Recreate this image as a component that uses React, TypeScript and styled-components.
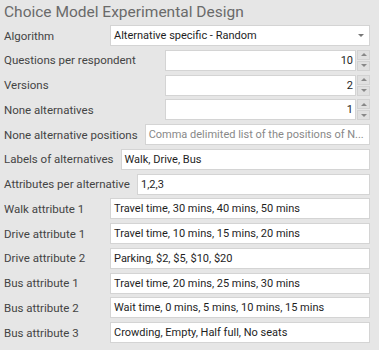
import React from "react";
import styled, { createGlobalStyle } from "styled-components";

const GlobalStyle = createGlobalStyle`
  body {
    margin: 0;
    background: #e6e6e6;
    font-family: Roboto, "Open Sans", sans-serif;
  }
`

interface field {
  label : string,
  kind : 'select' | 'number' | 'text',
  value? : string,
  placeholder? : string
}

const fields : field[] = [
  { label: 'Algorithm', kind: 'select', value: 'Alternative specific - Random' },
  { label: 'Questions per respondent', kind: 'number', value: '10' },
  { label: 'Versions', kind: 'number', value: '2' },
  { label: 'None alternatives', kind: 'number', value: '1' },
  { label: 'None alternative positions', kind: 'text', placeholder: 'Comma delimited list of the positions of N...' },
  { label: 'Labels of alternatives', kind: 'text', value: 'Walk, Drive, Bus' },
  { label: 'Attributes per alternative', kind: 'text', value: '1,2,3' },
  { label: 'Walk attribute 1', kind: 'text', value: 'Travel time, 30 mins, 40 mins, 50 mins' },
  { label: 'Drive attribute 1', kind: 'text', value: 'Travel time, 10 mins, 15 mins, 20 mins' },
  { label: 'Drive attribute 2', kind: 'text', value: 'Parking, $2, $5, $10, $20' },
  { label: 'Bus attribute 1', kind: 'text', value: 'Travel time, 20 mins, 25 mins, 30 mins' },
  { label: 'Bus attribute 2', kind: 'text', value: 'Wait time, 0 mins, 5 mins, 10 mins, 15 mins' },
  { label: 'Bus attribute 3', kind: 'text', value: 'Crowding, Empty, Half full, No seats' },
]

export default function App () {
  return (
    <>
      <GlobalStyle />
      <Panel>
        <Title>Choice Model Experimental Design</Title>
        <Form>
          {fields.map((f) => (
            <Row key={f.label}>
              <Label>{f.label}</Label>
              {f.kind === 'select' && (
                <Select>
                  <span>{f.value}</span>
                  <Caret />
                </Select>
              )}
              {f.kind === 'number' && (
                <NumberBox>
                  <NumberInput>{f.value}</NumberInput>
                  <Spinner>
                    <SpinButton><Arrow up /></SpinButton>
                    <SpinButton><Arrow /></SpinButton>
                  </Spinner>
                </NumberBox>
              )}
              {f.kind === 'text' && (
                <TextInput placeholder={!f.value}>{f.value || f.placeholder}</TextInput>
              )}
            </Row>
          ))}
        </Form>
      </Panel>
    </>
  )
}

const Panel = styled.div`
  width: 379px;
  height: 350px;
  box-sizing: border-box;
  padding: 1px 9px 0 4px;
`

const Title = styled.div`
  font-size: 15.5px;
  color: #6a6a6a;
  height: 24px;
  line-height: 22px;
  white-space: nowrap;
`

const Form = styled.div`
  display: flex;
  flex-direction: column;
  gap: 3.75px;
`

const Row = styled.div`
  display: flex;
  align-items: center;
  height: 21px;
`

const Label = styled.div`
  min-width: 99px;
  margin-right: 7px;
  font-size: 11.5px;
  color: #444;
  white-space: nowrap;
`

const boxBase = `
  height: 21px;
  box-sizing: border-box;
  background: #fff;
  border: 1px solid #d4d4d4;
  font-size: 11px;
  color: #1e1e1e;
  display: flex;
  align-items: center;
  white-space: nowrap;
  overflow: hidden;
`

const Select = styled.div`
  ${boxBase}
  flex: 1;
  padding: 0 3px;
  justify-content: space-between;
`

const Caret = styled.div`
  width: 0;
  height: 0;
  margin-right: 2px;
  border-left: 3px solid transparent;
  border-right: 3px solid transparent;
  border-top: 3px solid #777;
`

const NumberBox = styled.div`
  margin-left: auto;
  display: flex;
  height: 21px;
`

const NumberInput = styled.div`
  ${boxBase}
  width: 191px;
  justify-content: flex-end;
  padding-right: 2px;
`

const Spinner = styled.div`
  width: 13px;
  display: flex;
  flex-direction: column;
  gap: 1px;
  margin-left: 1px;
`

const SpinButton = styled.div`
  flex: 1;
  background: #e0e0e0;
  border: 1px solid #d2d2d2;
  display: flex;
  align-items: center;
  justify-content: center;
`

const Arrow = styled.div<{up? : boolean}>`
  width: 0;
  height: 0;
  border-left: 3px solid transparent;
  border-right: 3px solid transparent;
  ${(props) => props.up ? 'border-bottom: 3px solid #888;' : 'border-top: 3px solid #888;'}
`

const TextInput = styled.div<{placeholder : boolean}>`
  ${boxBase}
  flex: 1;
  padding: 0 3px;
  color: ${(props) => props.placeholder ? '#888' : '#1e1e1e'};
  text-overflow: ellipsis;
  display: block;
  line-height: 19px;
`
